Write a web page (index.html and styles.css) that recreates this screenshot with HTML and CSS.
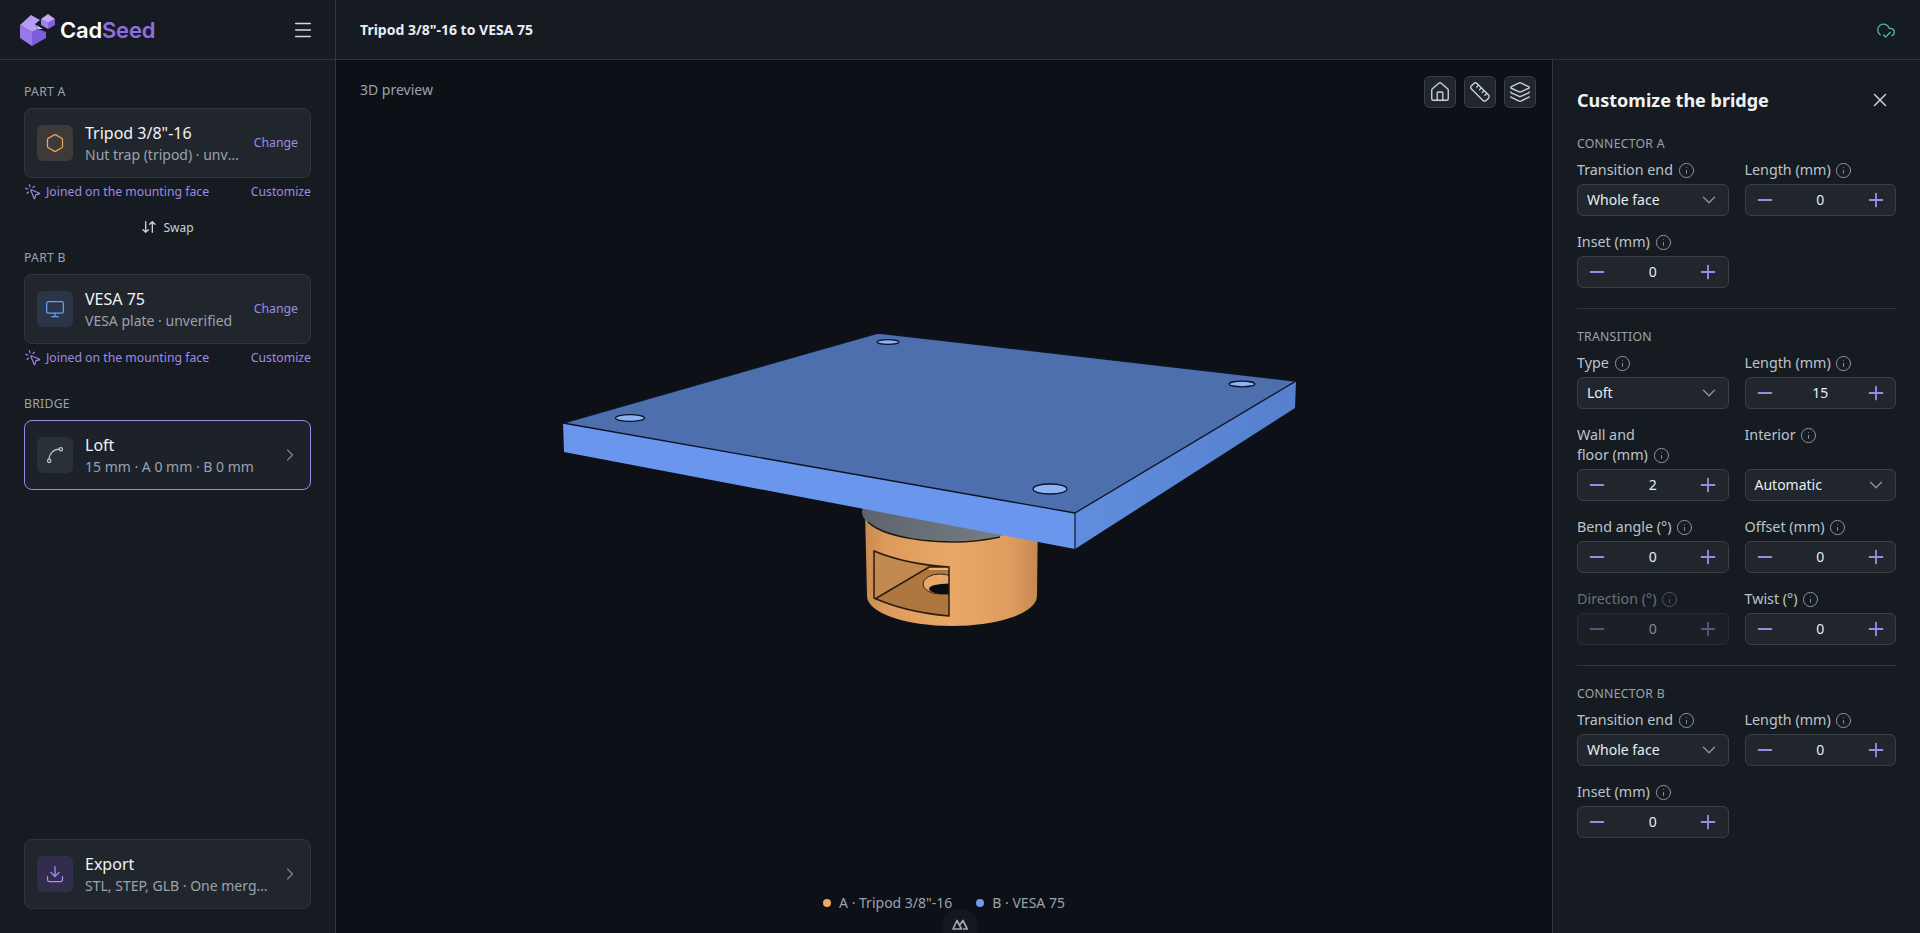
FILE: index.html
```html
<!DOCTYPE html>
<html lang="en">
<head>
  <meta charset="UTF-8" />
  <meta name="viewport" content="width=device-width, initial-scale=1.0" />
  <title>CadSeed</title>
  <link rel="stylesheet" href="styles.css">
</head>
<body>
  <svg class="sprite" width="0" height="0">
    <symbol id="i-info" viewBox="0 0 24 24"><circle cx="12" cy="12" r="10"/><path d="M12 16v-4M12 8h.01"/></symbol>
    <symbol id="i-minus" viewBox="0 0 24 24"><path d="M5 12h14"/></symbol>
    <symbol id="i-plus" viewBox="0 0 24 24"><path d="M5 12h14M12 5v14"/></symbol>
    <symbol id="i-down" viewBox="0 0 24 24"><path d="m6 9 6 6 6-6"/></symbol>
    <symbol id="i-right" viewBox="0 0 24 24"><path d="m9 18 6-6-6-6"/></symbol>
    <symbol id="i-click" viewBox="0 0 24 24"><path d="M14 4.1 12 6M5.1 8l-2.9-.8M6 12l-1.9 2M7.2 2.2 8 5.1M9.037 9.69a.498.498 0 0 1 .653-.653l11 4.5a.5.5 0 0 1-.074.949l-4.349 1.041a1 1 0 0 0-.74.739l-1.04 4.35a.5.5 0 0 1-.95.074z"/></symbol>
  </svg>

  <div class="app">
    <aside class="sidebar">
      <div class="brand">
        <div class="logo">
          <svg width="36" height="32" viewBox="0 0 36 32">
            <polygon points="1,11 13,18 13,32 1,24" fill="#9a78ea"/>
            <polygon points="13,18 19,15 27,18 27,24 13,32" fill="#7e5ce0"/>
            <polygon points="17,11 24,15 19,15" fill="#d8c8fa"/>
            <polygon points="1,11 12,1 21,6 16,10 19,15 13,18" fill="#b79cf5"/>
            <polygon points="22,5 29,0 36,5 29,9" fill="#c3abf7"/>
            <polygon points="22,5 29,9 29,15 22,11" fill="#a282ee"/>
            <polygon points="29,9 36,5 36,11 29,15" fill="#8463e2"/>
          </svg>
          <span class="logo-text">Cad<b>Seed</b></span>
        </div>
        <svg class="ico menu" viewBox="0 0 24 24"><path d="M4 5h16M4 12h16M4 19h16"/></svg>
      </div>

      <div class="side-body">
        <div class="sec-label">PART A</div>
        <div class="card">
          <div class="card-ico ico-a">
            <svg class="ico" viewBox="0 0 24 24"><path d="M21 16V8a2 2 0 0 0-1-1.73l-7-4a2 2 0 0 0-2 0l-7 4A2 2 0 0 0 3 8v8a2 2 0 0 0 1 1.73l7 4a2 2 0 0 0 2 0l7-4A2 2 0 0 0 21 16z"/></svg>
          </div>
          <div class="card-text">
            <div class="card-title">Tripod 3/8"-16</div>
            <div class="card-sub">Nut trap (tripod) · unverified</div>
          </div>
          <span class="change">Change</span>
        </div>
        <div class="join">
          <svg class="ico"><use href="#i-click"/></svg>
          <span class="join-text">Joined on the mounting face</span>
          <span>Customize</span>
        </div>

        <div class="swap">
          <svg class="ico" viewBox="0 0 24 24"><path d="m3 16 4 4 4-4M7 20V4M21 8l-4-4-4 4M17 4v16"/></svg>
          Swap
        </div>

        <div class="sec-label">PART B</div>
        <div class="card">
          <div class="card-ico ico-b">
            <svg class="ico" viewBox="0 0 24 24"><rect x="2" y="3" width="20" height="14" rx="2"/><path d="M8 21h8M12 17v4"/></svg>
          </div>
          <div class="card-text">
            <div class="card-title">VESA 75</div>
            <div class="card-sub">VESA plate · unverified</div>
          </div>
          <span class="change">Change</span>
        </div>
        <div class="join">
          <svg class="ico"><use href="#i-click"/></svg>
          <span class="join-text">Joined on the mounting face</span>
          <span>Customize</span>
        </div>

        <div class="sec-label bridge-label">BRIDGE</div>
        <div class="card active">
          <div class="card-ico ico-c">
            <svg class="ico" viewBox="0 0 24 24"><circle cx="19" cy="5" r="2"/><circle cx="5" cy="19" r="2"/><path d="M5 17A12 12 0 0 1 17 5"/></svg>
          </div>
          <div class="card-text">
            <div class="card-title">Loft</div>
            <div class="card-sub">15 mm · A 0 mm · B 0 mm</div>
          </div>
          <svg class="ico chev"><use href="#i-right"/></svg>
        </div>

        <div class="card export">
          <div class="card-ico ico-d">
            <svg class="ico" viewBox="0 0 24 24"><path d="M12 15V3M21 15v4a2 2 0 0 1-2 2H5a2 2 0 0 1-2-2v-4M7 10l5 5 5-5"/></svg>
          </div>
          <div class="card-text">
            <div class="card-title">Export</div>
            <div class="card-sub">STL, STEP, GLB · One merged file</div>
          </div>
          <svg class="ico chev"><use href="#i-right"/></svg>
        </div>
      </div>
    </aside>

    <div class="content">
      <header class="topbar">
        <h1>Tripod 3/8"-16 to VESA 75</h1>
        <svg class="ico cloud" viewBox="0 0 24 24"><path d="m17 15-5.5 5.5L9 18M5 17.743A7 7 0 1 1 15.71 10h1.79a4.5 4.5 0 0 1 1.5 8.742"/></svg>
      </header>

      <div class="work">
        <main class="viewer">
          <svg class="model" viewBox="336 60 1216 873" width="1216" height="873">
            <defs>
              <linearGradient id="cyl" x1="0" x2="1" y1="0" y2="0">
                <stop offset="0" stop-color="#c98a4e"/>
                <stop offset=".12" stop-color="#dc9a5c"/>
                <stop offset=".5" stop-color="#eaa867"/>
                <stop offset=".85" stop-color="#dd9c5e"/>
                <stop offset="1" stop-color="#c48850"/>
              </linearGradient>
              <linearGradient id="lip" x1="0" x2="1" y1="0" y2="0">
                <stop offset="0" stop-color="#5c636c"/>
                <stop offset="1" stop-color="#7d868c"/>
              </linearGradient>
              <linearGradient id="side" x1="0" x2="1" y1="0" y2="0">
                <stop offset="0" stop-color="#618ddf"/>
                <stop offset="1" stop-color="#5580cd"/>
              </linearGradient>
              <clipPath id="win"><path d="M874 551Q905 564 949 567V616Q905 612 874 598Z"/></clipPath>
            </defs>

            <!-- nut trap cylinder -->
            <path d="M865 510 867 596A85 30 0 0 0 1037 596L1038 510Z" fill="url(#cyl)"/>
            <ellipse cx="951" cy="512" rx="89" ry="29" fill="url(#lip)"/>
            <path d="M868 522A88 29 0 0 0 1000 537" fill="none" stroke="#1d1611" stroke-width="1.4"/>

            <!-- slot in the cylinder -->
            <g clip-path="url(#win)">
              <rect x="870" y="545" width="85" height="75" fill="#ad773f"/>
              <polygon points="874,551 929,567 875,599" fill="#c08a50"/>
              <polygon points="929,565 952,565 952,570 929,570" fill="#e8b27a"/>
              <ellipse cx="940" cy="584" rx="17" ry="10" fill="#e6a768" stroke="#3a2614"/>
              <ellipse cx="949" cy="589" rx="20" ry="5.5" fill="#0b0d10"/>
            </g>
            <path d="M874 551Q905 564 949 567V616Q905 612 874 598Z M875 599 929 567H949" fill="none" stroke="#2a1c10" stroke-width="1.5"/>

            <!-- VESA plate -->
            <polygon points="563,423 1075,513 1075,549 564,452" fill="#6a96ee"/>
            <polygon points="1075,513 1296,381 1295,408 1075,549" fill="url(#side)"/>
            <polygon points="563,423 878,333 1296,381 1075,513" fill="#4d6fae" stroke="#0c1424" stroke-width="1.3" stroke-linejoin="round"/>
            <line x1="1075" y1="513" x2="1075" y2="549" stroke="#0c1424" stroke-width="1.2"/>
            <g fill="#8db3f6" stroke="#0c1424" stroke-width="1.3">
              <ellipse cx="630" cy="418" rx="14.5" ry="3.4"/>
              <ellipse cx="888" cy="342" rx="11" ry="2.4"/>
              <ellipse cx="1242" cy="384" rx="13" ry="2.8"/>
              <ellipse cx="1050" cy="489" rx="17" ry="5"/>
            </g>
          </svg>

          <div class="viewer-label">3D preview</div>
          <div class="tools">
            <button class="tool"><svg class="ico" viewBox="0 0 24 24"><path d="M15 21v-8a1 1 0 0 0-1-1h-4a1 1 0 0 0-1 1v8"/><path d="M3 10a2 2 0 0 1 .709-1.528l7-5.999a2 2 0 0 1 2.582 0l7 5.999A2 2 0 0 1 21 10v9a2 2 0 0 1-2 2H5a2 2 0 0 1-2-2z"/></svg></button>
            <button class="tool"><svg class="ico" viewBox="0 0 24 24"><path d="M21.3 15.3a2.4 2.4 0 0 1 0 3.4l-2.6 2.6a2.4 2.4 0 0 1-3.4 0L2.7 8.7a2.41 2.41 0 0 1 0-3.4l2.6-2.6a2.41 2.41 0 0 1 3.4 0Z"/><path d="m14.5 12.5 2-2M11.5 9.5l2-2M8.5 6.5l2-2M17.5 15.5l2-2"/></svg></button>
            <button class="tool"><svg class="ico" viewBox="0 0 24 24"><path d="M12.83 2.18a2 2 0 0 0-1.66 0L2.6 6.08a1 1 0 0 0 0 1.83l8.58 3.91a2 2 0 0 0 1.66 0l8.58-3.9a1 1 0 0 0 0-1.83Z"/><path d="M2 12a1 1 0 0 0 .58.91l8.6 3.91a2 2 0 0 0 1.65 0l8.58-3.9A1 1 0 0 0 22 12"/><path d="M2 17a1 1 0 0 0 .58.91l8.6 3.91a2 2 0 0 0 1.65 0l8.58-3.9A1 1 0 0 0 22 17"/></svg></button>
          </div>
          <div class="legend">
            <span class="legend-item"><i class="dot dot-a"></i>A · Tripod 3/8"-16</span>
            <span class="legend-item"><i class="dot dot-b"></i>B · VESA 75</span>
          </div>
          <div class="viewer-mark">
            <svg width="16" height="11" viewBox="0 0 16 11"><path d="M1 10 5 1.5 9.5 10ZM8 5.5 11 1.5 15.2 10H11" fill="none" stroke="#a2a7ad" stroke-width="1.7" stroke-linejoin="round"/></svg>
          </div>
        </main>

        <aside class="panel">
          <div class="panel-head">
            <h2>Customize the bridge</h2>
            <svg class="ico close" viewBox="0 0 24 24"><path d="M18 6 6 18M6 6l12 12"/></svg>
          </div>

          <section class="group">
            <div class="sec-label">CONNECTOR A</div>
            <div class="fields">
              <div class="field">
                <label>Transition end <svg class="ico info"><use href="#i-info"/></svg></label>
                <div class="select">Whole face <svg class="ico"><use href="#i-down"/></svg></div>
              </div>
              <div class="field">
                <label>Length (mm) <svg class="ico info"><use href="#i-info"/></svg></label>
                <div class="stepper"><svg class="ico"><use href="#i-minus"/></svg><span>0</span><svg class="ico"><use href="#i-plus"/></svg></div>
              </div>
              <div class="field">
                <label>Inset (mm) <svg class="ico info"><use href="#i-info"/></svg></label>
                <div class="stepper"><svg class="ico"><use href="#i-minus"/></svg><span>0</span><svg class="ico"><use href="#i-plus"/></svg></div>
              </div>
            </div>
          </section>

          <section class="group">
            <div class="sec-label">TRANSITION</div>
            <div class="fields">
              <div class="field">
                <label>Type <svg class="ico info"><use href="#i-info"/></svg></label>
                <div class="select">Loft <svg class="ico"><use href="#i-down"/></svg></div>
              </div>
              <div class="field">
                <label>Length (mm) <svg class="ico info"><use href="#i-info"/></svg></label>
                <div class="stepper"><svg class="ico"><use href="#i-minus"/></svg><span>15</span><svg class="ico"><use href="#i-plus"/></svg></div>
              </div>
              <div class="field">
                <label>Wall and<br>floor (mm) <svg class="ico info"><use href="#i-info"/></svg></label>
                <div class="stepper"><svg class="ico"><use href="#i-minus"/></svg><span>2</span><svg class="ico"><use href="#i-plus"/></svg></div>
              </div>
              <div class="field">
                <label>Interior <svg class="ico info"><use href="#i-info"/></svg></label>
                <div class="select">Automatic <svg class="ico"><use href="#i-down"/></svg></div>
              </div>
              <div class="field">
                <label>Bend angle (°) <svg class="ico info"><use href="#i-info"/></svg></label>
                <div class="stepper"><svg class="ico"><use href="#i-minus"/></svg><span>0</span><svg class="ico"><use href="#i-plus"/></svg></div>
              </div>
              <div class="field">
                <label>Offset (mm) <svg class="ico info"><use href="#i-info"/></svg></label>
                <div class="stepper"><svg class="ico"><use href="#i-minus"/></svg><span>0</span><svg class="ico"><use href="#i-plus"/></svg></div>
              </div>
              <div class="field disabled">
                <label>Direction (°) <svg class="ico info"><use href="#i-info"/></svg></label>
                <div class="stepper"><svg class="ico"><use href="#i-minus"/></svg><span>0</span><svg class="ico"><use href="#i-plus"/></svg></div>
              </div>
              <div class="field">
                <label>Twist (°) <svg class="ico info"><use href="#i-info"/></svg></label>
                <div class="stepper"><svg class="ico"><use href="#i-minus"/></svg><span>0</span><svg class="ico"><use href="#i-plus"/></svg></div>
              </div>
            </div>
          </section>

          <section class="group last">
            <div class="sec-label">CONNECTOR B</div>
            <div class="fields">
              <div class="field">
                <label>Transition end <svg class="ico info"><use href="#i-info"/></svg></label>
                <div class="select">Whole face <svg class="ico"><use href="#i-down"/></svg></div>
              </div>
              <div class="field">
                <label>Length (mm) <svg class="ico info"><use href="#i-info"/></svg></label>
                <div class="stepper"><svg class="ico"><use href="#i-minus"/></svg><span>0</span><svg class="ico"><use href="#i-plus"/></svg></div>
              </div>
              <div class="field">
                <label>Inset (mm) <svg class="ico info"><use href="#i-info"/></svg></label>
                <div class="stepper"><svg class="ico"><use href="#i-minus"/></svg><span>0</span><svg class="ico"><use href="#i-plus"/></svg></div>
              </div>
            </div>
          </section>
        </aside>
      </div>
    </div>
  </div>
</body>
</html>
```

FILE: styles.css
```css
* {
  box-sizing: border-box;
}

body {
  margin: 0;
  height: 100vh;
  overflow: hidden;
  font-family: "Noto Sans", sans-serif;
  font-size: 14px;
  color: #e6edf3;
  background: #0d1117;
}

.sprite {
  position: absolute;
}

.ico {
  width: 16px;
  height: 16px;
  flex: none;
  fill: none;
  stroke: currentColor;
  stroke-width: 2;
  stroke-linecap: round;
  stroke-linejoin: round;
}

.app {
  display: flex;
  height: 100%;
}

/* left column */
.sidebar {
  width: 336px;
  flex: none;
  display: flex;
  flex-direction: column;
  background: #161b22;
  border-right: 1px solid #30363d;
}

.brand {
  height: 60px;
  flex: none;
  display: flex;
  align-items: center;
  justify-content: space-between;
  padding: 0 21px 0 19px;
  border-bottom: 1px solid #30363d;
}

.logo {
  display: flex;
  align-items: center;
  gap: 5px;
}

.logo-text {
  font-family: Inter, sans-serif;
  font-size: 22px;
  font-weight: 600;
  letter-spacing: -0.2px;
  color: #fff;
}

.logo-text b {
  font-weight: 600;
  color: #8f6fe0;
}

.menu {
  width: 22px;
  height: 22px;
  color: #d5d9de;
  stroke-width: 1.6;
}

.side-body {
  flex: 1;
  display: flex;
  flex-direction: column;
  padding: 24px 24px 24px;
}

.sec-label {
  font-size: 12.25px;
  line-height: 16px;
  letter-spacing: 0.25px;
  color: #9aa3ad;
  margin-bottom: 8px;
}

.card {
  height: 70px;
  flex: none;
  display: flex;
  align-items: center;
  gap: 12px;
  padding: 0 12px;
  background: #21262d;
  border: 1px solid #30363d;
  border-radius: 8px;
}

.card.active {
  border-color: #9d8ae6;
  background: #1c212a;
}

.card.export {
  margin-top: auto;
}

.card-ico {
  width: 36px;
  height: 36px;
  flex: none;
  display: flex;
  align-items: center;
  justify-content: center;
  border-radius: 6px;
}

.card-ico .ico {
  width: 20px;
  height: 20px;
  stroke-width: 1.5;
}

.ico-a { background: #3d3a3a; color: #eda765; }
.ico-b { background: #2a3648; color: #6e9cf0; }
.ico-c { background: #2a3038; color: #bfc5cc; }
.ico-d { background: #332d4d; color: #a78bfa; }

.card-text {
  flex: 1;
  min-width: 0;
}

.card-title {
  font-size: 16px;
  line-height: 23px;
  color: #f0f3f6;
}

.card-sub {
  font-size: 14px;
  line-height: 20px;
  color: #9aa3ad;
  white-space: nowrap;
  overflow: hidden;
  text-overflow: ellipsis;
}

.change {
  font-size: 12.25px;
  margin-bottom: 2px;
  color: #9d8ae6;
}

.chev {
  color: #7d858e;
  width: 20px;
  height: 20px;
  stroke-width: 1.4;
  margin-right: -2px;
}

.join {
  display: flex;
  align-items: center;
  gap: 4px;
  margin-top: 5px;
  font-size: 12.25px;
  line-height: 18px;
  color: #9d8ae6;
}

.join .ico {
  width: 18px;
  height: 18px;
  stroke-width: 1.5;
}

.join-text {
  flex: 1;
}

.swap {
  height: 24px;
  display: flex;
  align-items: center;
  justify-content: center;
  gap: 6px;
  margin: 14px 0 11px;
  font-size: 12px;
  color: #c9d1d9;
}

.bridge-label {
  margin-top: 29px;
}

/* top bar */
.content {
  flex: 1;
  min-width: 0;
  display: flex;
  flex-direction: column;
}

.topbar {
  height: 60px;
  flex: none;
  display: flex;
  align-items: center;
  justify-content: space-between;
  padding: 0 24px;
  background: #161b22;
  border-bottom: 1px solid #30363d;
}

.topbar h1 {
  margin: 0;
  font-size: 14px;
  font-weight: 700;
}

.cloud {
  width: 20px;
  height: 20px;
  color: #4fb899;
  stroke-width: 1.6;
}

.work {
  flex: 1;
  min-height: 0;
  display: flex;
}

/* 3d viewer */
.viewer {
  flex: 1;
  position: relative;
  overflow: hidden;
}

.model {
  position: absolute;
  left: 0;
  top: 0;
}

.viewer-label {
  position: absolute;
  left: 24px;
  top: 20px;
  font-size: 14px;
  line-height: 20px;
  color: #9aa3ad;
}

.tools {
  position: absolute;
  top: 16px;
  right: 16px;
  display: flex;
  gap: 8px;
}

.tool {
  width: 32px;
  height: 32px;
  display: flex;
  align-items: center;
  justify-content: center;
  padding: 0;
  color: #c9d1d9;
  background: #21262d;
  border: 1px solid #3a4048;
  border-radius: 6px;
}

.tool .ico {
  width: 22px;
  height: 22px;
  stroke-width: 1.5;
}

.legend {
  position: absolute;
  left: 0;
  right: 0;
  bottom: 20px;
  display: flex;
  justify-content: center;
  gap: 24px;
  font-size: 14px;
  line-height: 20px;
  color: #9aa3ad;
}

.legend-item {
  display: flex;
  align-items: center;
  gap: 8px;
}

.dot {
  width: 8px;
  height: 8px;
  border-radius: 50%;
}

.dot-a { background: #f0a868; }
.dot-b { background: #6e9cf0; }

.viewer-mark {
  position: absolute;
  left: calc(50% - 2px);
  bottom: -12px;
  width: 36px;
  height: 36px;
  display: flex;
  justify-content: center;
  padding-top: 10px;
  border-radius: 50%;
  background: #14181e;
}

/* right panel */
.panel {
  width: 368px;
  flex: none;
  padding: 26px 24px 0;
  background: #161b22;
  border-left: 1px solid #30363d;
  overflow: hidden;
}

.panel-head {
  display: flex;
  align-items: center;
  justify-content: space-between;
  margin-bottom: 22px;
}

.panel-head h2 {
  margin: 0;
  font-size: 18px;
  line-height: 28px;
  font-weight: 700;
  color: #f0f3f6;
}

.close {
  width: 22px;
  height: 22px;
  margin-right: 5px;
  color: #c9d1d9;
  stroke-width: 1.6;
}

.group {
  padding-bottom: 20px;
  margin-bottom: 20px;
  border-bottom: 1px solid #30363d;
}

.group.last {
  border-bottom: 0;
}

.fields {
  display: grid;
  grid-template-columns: 1fr 1fr;
  gap: 16px;
}

.field {
  display: flex;
  flex-direction: column;
  justify-content: space-between;
  min-width: 0;
}

.field label {
  display: block;
  font-size: 14.3px;
  line-height: 20px;
  margin-bottom: 4px;
  color: #bcc3cb;
}

.info {
  width: 17px;
  height: 17px;
  margin-left: 1px;
  vertical-align: -4px;
  color: #8b949e;
  stroke-width: 1.4;
}

.select,
.stepper {
  height: 32px;
  display: flex;
  align-items: center;
  justify-content: space-between;
  padding-bottom: 1px;
  background: #21262d;
  border: 1px solid #3a4048;
  border-radius: 6px;
  font-size: 14px;
  color: #e6edf3;
}

.select {
  padding-left: 9px;
  padding-right: 8px;
}

.select .ico {
  width: 22px;
  height: 22px;
  color: #8b949e;
  stroke-width: 1.5;
}

.stepper {
  padding-left: 8px;
  padding-right: 8px;
}

.stepper .ico {
  width: 22px;
  height: 22px;
  color: #9d8ae6;
}

.field.disabled {
  opacity: 0.5;
}
```
